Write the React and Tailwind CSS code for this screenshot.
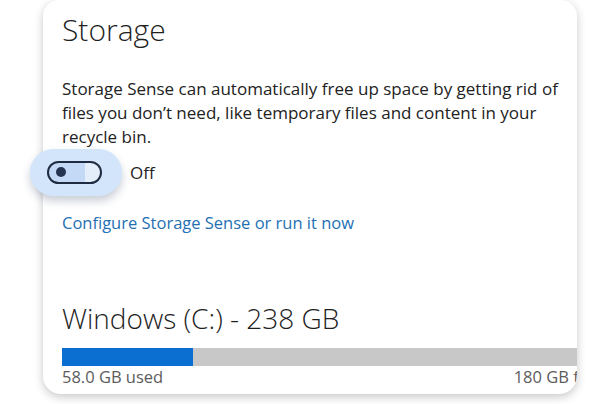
import React from 'react';

const font = { fontFamily: '"Open Sans", "Noto Sans", sans-serif' };

const StorageToggle = () => (
  <div className="relative flex items-center h-[24px]">
    {/* magnified focus glow */}
    <div className="absolute left-[-32px] top-[-11px] w-[92px] h-[47px] rounded-[24px] bg-[#d3e5fb] shadow-[0_5px_8px_rgba(60,80,110,0.28)]" />
    <div className="relative ml-[-15px] w-[55px] h-[23px] rounded-full border-2 border-[#1f2b40] bg-gradient-to-r from-[#c3d9f5] from-70% to-[#e4eefb] to-70% flex items-center pl-[7px]">
      <div className="w-[10px] h-[10px] rounded-full bg-[#243450]" />
    </div>
    <span className="relative ml-[28px] text-[17px] text-[#1f1f1f] leading-none">Off</span>
  </div>
);

export default function App() {
  return (
    <div className="w-[594px] h-[404px] bg-white overflow-hidden" style={font}>
      <div className="ml-[43px] w-[534px] h-[394px] rounded-b-[18px] rounded-t-[16px] bg-white shadow-[0_3px_10px_rgba(0,0,0,0.22)]">
        <div className="pl-[19px] pt-[8px]">
          <h1 className="text-[30px] font-light leading-[44px] text-[#1f1f1f]">Storage</h1>

          <p className="mt-[25px] text-[17px] leading-[24px] text-[#222] whitespace-nowrap">
            Storage Sense can automatically free up space by getting rid of<br />
            files you don’t need, like temporary files and content in your<br />
            recycle bin.
          </p>

          <div className="mt-[11px]">
            <StorageToggle />
          </div>

          <a className="block mt-[28px] text-[16.5px] leading-[22px] text-[#2470b3]">
            Configure Storage Sense or run it now
          </a>

          <h2 className="mt-[64px] text-[28px] font-light leading-[40px] text-[#1f1f1f]">
            Windows (C:) - 238 GB
          </h2>

          <div className="w-[515px] overflow-hidden rounded-br-[12px]">
            <div className="mt-[10px] w-[542px] h-[18px] bg-[#c8c8c8] flex">
              <div className="w-[131px] h-full bg-[#0a6fd1]" />
            </div>

            <div className="w-[542px] flex justify-between text-[16.5px] leading-[22px] text-[#5c5c5c]">
              <span>58.0 GB used</span>
              <span>180 GB free</span>
            </div>
          </div>
        </div>
      </div>
    </div>
  );
}
